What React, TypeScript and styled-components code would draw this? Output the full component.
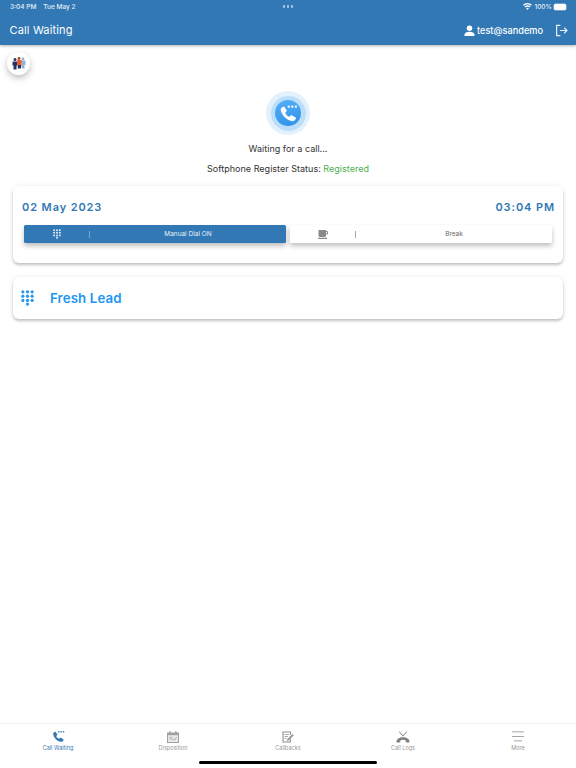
import React from 'react';
import styled, { createGlobalStyle } from 'styled-components';

const GlobalStyle = createGlobalStyle`
    html, body {
        margin: 0;
        padding: 0;
        background: #fff;
    }
    body {
        font-family: Inter, "Liberation Sans", sans-serif;
        -webkit-font-smoothing: antialiased;
    }
`;

const Screen = styled.div`
    position: relative;
    width: 576px;
    height: 768px;
    display: flex;
    flex-direction: column;
    overflow: hidden;
    background: #fff;
`;

const Header = styled.header`
    height: 45px;
    flex: none;
    background: #3178b5;
    box-shadow: 0 1px 3px rgba(0, 0, 0, 0.3);
    color: #fff;
    display: flex;
    flex-direction: column;
    position: relative;
    z-index: 2;
`;

const StatusBar = styled.div`
    height: 13px;
    padding: 0 10px;
    display: grid;
    grid-template-columns: 1fr auto 1fr;
    align-items: center;
    font-size: 6.5px;
    font-weight: 500;
    color: #e6eff7;
`;

const StatusLeft = styled.div`
    display: flex;
    gap: 7px;
`;

const StatusRight = styled.div`
    display: flex;
    justify-content: flex-end;
    align-items: center;
    gap: 2px;
`;

const Dots = styled.div`
    display: flex;
    gap: 1.5px;
`;

const Dot = styled.span`
    width: 2.5px;
    height: 2.5px;
    border-radius: 50%;
    background: #a9cbe8;
`;

const Battery = styled.div`
    width: 12px;
    height: 6px;
    border-radius: 1.5px;
    background: #fff;
    box-shadow: 0 0 0 0.5px rgba(255, 255, 255, 0.6);
`;

const TitleRow = styled.div`
    flex: 1;
    padding: 2px 8px 0 9.5px;
    display: flex;
    align-items: center;
    justify-content: space-between;
`;

const Title = styled.div`
    font-size: 11px;
    font-weight: 400;
    letter-spacing: 0.15px;
`;

const HeaderActions = styled.div`
    display: flex;
    align-items: center;
`;

const UserName = styled.span`
    font-size: 9.2px;
    font-weight: 500;
    margin-left: 2px;
    margin-right: 12px;
`;

const TeamButton = styled.div`
    position: absolute;
    left: 7px;
    top: 52px;
    width: 23px;
    height: 23px;
    border-radius: 50%;
    background: #fff;
    box-shadow: 0 3px 6px rgba(0, 0, 0, 0.25);
    display: flex;
    align-items: center;
    justify-content: center;
    z-index: 1;
`;

const Main = styled.main`
    flex: 1;
    display: flex;
    flex-direction: column;
    align-items: center;
    padding: 46px 13px 0;
`;

const PulseOuter = styled.div`
    width: 44px;
    height: 44px;
    border-radius: 50%;
    background: #e3f1fd;
    display: flex;
    align-items: center;
    justify-content: center;
`;

const PulseInner = styled.div`
    width: 35px;
    height: 35px;
    border-radius: 50%;
    background: #bbdefb;
    display: flex;
    align-items: center;
    justify-content: center;
`;

const PulseCore = styled.div`
    width: 26px;
    height: 26px;
    border-radius: 50%;
    background: linear-gradient(160deg, #58b0f7, #2b90ea);
    display: flex;
    align-items: center;
    justify-content: center;
`;

const WaitingText = styled.div`
    margin-top: 8px;
    font-size: 9px;
    line-height: 12px;
    color: #333;
    letter-spacing: 0.02px;
`;

const RegisterText = styled.div`
    margin-top: 8px;
    font-size: 9px;
    line-height: 12px;
    color: #333;
    letter-spacing: 0.02px;
`;

const Registered = styled.span`
    color: #4caf50;
`;

const Card = styled.section`
    align-self: stretch;
    background: #fff;
    border-radius: 6px;
    box-shadow: 0 2px 3px rgba(0, 0, 0, 0.22), 0 0 6px rgba(0, 0, 0, 0.06);
`;

const ClockCard = styled(Card)`
    margin-top: 11px;
    height: 77px;
    padding: 14px 8px 0 9px;
    box-sizing: border-box;
`;

const ClockRow = styled.div`
    display: flex;
    justify-content: space-between;
    align-items: center;
    height: 14px;
    font-size: 11px;
    font-weight: 600;
    letter-spacing: 0.9px;
    color: #3178b5;
`;

const ActionRow = styled.div`
    display: flex;
    gap: 4px;
    margin-top: 11px;
    padding: 0 3px 0 2px;
`;

const ActionButton = styled.div<{ $active?: boolean }>`
    flex: 1;
    height: 18px;
    border-radius: 1.5px;
    display: flex;
    align-items: center;
    background: ${p => (p.$active ? '#3178b5' : '#fff')};
    color: ${p => (p.$active ? '#e8f0f7' : '#666')};
    box-shadow: 0 3px 5px rgba(0, 0, 0, 0.25);
`;

const ActionIcon = styled.div`
    width: 65px;
    display: flex;
    justify-content: center;
`;

const ActionLabel = styled.div<{ $active?: boolean }>`
    flex: 1;
    height: 7px;
    display: flex;
    align-items: center;
    justify-content: center;
    font-size: 6.5px;
    border-left: 1px solid ${p => (p.$active ? 'rgba(255, 255, 255, 0.35)' : '#aaa')};
`;

const LeadCard = styled(Card)`
    margin-top: 14px;
    height: 42px;
    display: flex;
    align-items: center;
    padding-left: 8px;
    gap: 16px;
`;

const LeadTitle = styled.div`
    font-size: 13.3px;
    font-weight: 600;
    letter-spacing: 0.1px;
    color: #2196f3;
`;

const TabBar = styled.nav`
    height: 44px;
    flex: none;
    border-top: 1px solid #f2f2f2;
    display: grid;
    grid-template-columns: repeat(5, 115px);
    padding: 0 0 0 0.5px;
`;

const Tab = styled.div<{ $active?: boolean }>`
    display: flex;
    flex-direction: column;
    align-items: center;
    padding-top: 6px;
    color: ${p => (p.$active ? '#3178b5' : '#999')};
`;

const TabIcon = styled.div`
    height: 13px;
    display: flex;
    align-items: center;
    justify-content: center;
`;

const TabLabel = styled.div`
    margin-top: 2px;
    font-size: 5.5px;
    line-height: 7px;
`;

const HomeIndicator = styled.div`
    position: absolute;
    left: 199px;
    bottom: 4px;
    width: 178px;
    height: 3px;
    border-radius: 2px;
    background: #000;
`;

const KeypadIcon: React.FC<{ width: number; color: string }> = ({ width, color }) => {
    const dots: [number, number][] = [];
    for (let y = 0; y < 3; y++) {
        for (let x = 0; x < 3; x++) dots.push([2 + x * 5, 2 + y * 4.6]);
    }
    return (
        <svg width={width} height={(width * 17) / 14} viewBox="0 0 14 17" fill={color}>
            {dots.map(([x, y]) => (
                <circle key={`${x}-${y}`} cx={x} cy={y} r="1.7" />
            ))}
            <circle cx="7" cy="15.2" r="1.7" />
        </svg>
    );
};

const handset =
    'M6.5 3 L10 8.500 L7.800 11 C8.800 13.300 10.700 15.200 13 16.200 L15.500 14 L21.500 17.500 C21 20.300 18.800 22.300 16.300 21.800 C9.500 20.500 3.500 14.500 2.200 7.700 C1.800 5.200 3.800 3.300 6.500 3Z';

const PhoneDots: React.FC<{ size: number; color: string }> = ({ size, color }) => (
    <svg width={size} height={size} viewBox="0 0 24 24" fill={color}>
        <path d={handset} />
        <rect x="11" y="2" width="2.600" height="2.600" />
        <rect x="15.500" y="2" width="2.600" height="2.600" />
        <rect x="20" y="2" width="2.600" height="2.600" />
    </svg>
);

const App: React.FC = () => (
    <Screen>
        <GlobalStyle />
        <Header>
            <StatusBar>
                <StatusLeft>
                    <span>3:04 PM</span>
                    <span>Tue May 2</span>
                </StatusLeft>
                <Dots>
                    <Dot />
                    <Dot />
                    <Dot />
                </Dots>
                <StatusRight>
                    <svg width="9" height="7" viewBox="0 0 24 18" fill="#fff">
                        <path d="M12 18l-3.600-4.200a5.500 5.500 0 0 1 7.200 0L12 18zM6.600 11.700L4.200 9a12 12 0 0 1 15.600 0l-2.400 2.700a8.400 8.400 0 0 0-10.800 0zM2.400 6.900L0 4.200a18.400 18.400 0 0 1 24 0l-2.400 2.700a14.800 14.800 0 0 0-19.200 0z" />
                    </svg>
                    <span>100%</span>
                    <Battery />
                </StatusRight>
            </StatusBar>
            <TitleRow>
                <Title>Call Waiting</Title>
                <HeaderActions>
                    <svg width="11" height="11" viewBox="0 0 24 24" fill="#fff">
                        <circle cx="12" cy="7" r="6" />
                        <path d="M1 24v-3c0-4 5-6.500 11-6.500S23 17 23 21v3z" />
                    </svg>
                    <UserName>test@sandemo</UserName>
                    <svg width="13" height="13" viewBox="0 0 24 24" fill="none" stroke="#e8f0f7" strokeWidth="2.200">
                        <path d="M10 2.500H3v19h7M9 12h13M17 7l5 5-5 5" />
                    </svg>
                </HeaderActions>
            </TitleRow>
        </Header>

        <TeamButton>
            <svg width="14" height="13" viewBox="0 0 14 13">
                <circle cx="11" cy="2" r="1.400" fill="#8fb4d9" />
                <path d="M9 3.500h4.500v4.500h-1v3.500H10z" fill="#8fb4d9" />
                <circle cx="3" cy="2.500" r="1.500" fill="#27325f" />
                <path d="M0.500 4.500h5v4h-1v4h-3v-4h-1z" fill="#27325f" />
                <circle cx="7" cy="1.500" r="1.400" fill="#a5432a" />
                <path d="M5 3h4.500v5l-0.500 3H6z" fill="#ef5a28" />
                <path d="M5.800 8h3.200v3.500H5.800z" fill="#27325f" />
            </svg>
        </TeamButton>

        <Main>
            <PulseOuter>
                <PulseInner>
                    <PulseCore>
                        <PhoneDots size={19} color="#fff" />
                    </PulseCore>
                </PulseInner>
            </PulseOuter>
            <WaitingText>Waiting for a call...</WaitingText>
            <RegisterText>
                Softphone Register Status: <Registered>Registered</Registered>
            </RegisterText>

            <ClockCard>
                <ClockRow>
                    <span>02 May 2023</span>
                    <span>03:04 PM</span>
                </ClockRow>
                <ActionRow>
                    <ActionButton $active>
                        <ActionIcon>
                            <KeypadIcon width={8} color="#e8f0f7" />
                        </ActionIcon>
                        <ActionLabel $active>Manual Dial ON</ActionLabel>
                    </ActionButton>
                    <ActionButton>
                        <ActionIcon>
                            <svg width="10" height="9" viewBox="0 0 20 18" fill="#8a8a8a">
                                <path d="M1 0h15v2h2a2 2 0 0 1 2 2v3a2 2 0 0 1-2 2h-2v2a3 3 0 0 1-3 3H4a3 3 0 0 1-3-3zM16 4v3h2V4zM0 15.500h18V18H0z" />
                            </svg>
                        </ActionIcon>
                        <ActionLabel>Break</ActionLabel>
                    </ActionButton>
                </ActionRow>
            </ClockCard>

            <LeadCard>
                <KeypadIcon width={13} color="#2196f3" />
                <LeadTitle>Fresh Lead</LeadTitle>
            </LeadCard>
        </Main>

        <TabBar>
            <Tab $active>
                <TabIcon>
                    <PhoneDots size={13} color="#3178b5" />
                </TabIcon>
                <TabLabel>Call Waiting</TabLabel>
            </Tab>
            <Tab>
                <TabIcon>
                    <svg width="12" height="12" viewBox="0 0 24 24" fill="#a0a0a0">
                        <path d="M5 0h2.500v3h9V0H19v3h5v21H0V3h5zM2 9v13h20V9z" />
                        <path d="M2 9h20v13H2z" fill="#e9e9e9" />
                        <path d="M5 12h6v1.500H5zM5 15.500h6V17H5zM13 15l2 2 4-5 1 1-5 6-3-3z" />
                    </svg>
                </TabIcon>
                <TabLabel>Disposition</TabLabel>
            </Tab>
            <Tab>
                <TabIcon>
                    <svg width="12" height="12" viewBox="0 0 24 24" fill="#909090">
                        <path d="M1 1h17v6l-2.200 2.200V3.200H3.200v17.600h12.600V17l2.200-2.200V23H1z" />
                        <path d="M5 6h9v1.600H5zM5 10h7v1.600H5zM5 14h4v1.600H5zM21 6l2.500 2.500L13 19l-3.500 1 1-3.500z" />
                    </svg>
                </TabIcon>
                <TabLabel>Callbacks</TabLabel>
            </Tab>
            <Tab>
                <TabIcon>
                    <svg width="14" height="12" viewBox="0 0 28 24" fill="#808080">
                        <path d="M1 21c0-5 6-8.500 13-8.500S27 16 27 21c0 1-.7 2-1.700 2h-4c-1 0-1.800-.8-1.800-1.800v-2.400c-1.500-.8-3.300-1.100-5.500-1.100s-4 .3-5.500 1.100v2.400C9 22.200 8.200 23 7.200 23h-4C1.700 23 1 22 1 21z" />
                        <path d="M7 1l7 7.500L21 1l1.200 1.100L14 11 5.800 2.100z" />
                    </svg>
                </TabIcon>
                <TabLabel>Call Logs</TabLabel>
            </Tab>
            <Tab>
                <TabIcon>
                    <svg width="12" height="11" viewBox="0 0 24 22" fill="#8a8a8a">
                        <path d="M0 1h24v1.600H0zM0 10h24v1.600H0zM4 19h16v1.600H4z" />
                    </svg>
                </TabIcon>
                <TabLabel>More</TabLabel>
            </Tab>
        </TabBar>
        <HomeIndicator />
    </Screen>
);

export default App;
